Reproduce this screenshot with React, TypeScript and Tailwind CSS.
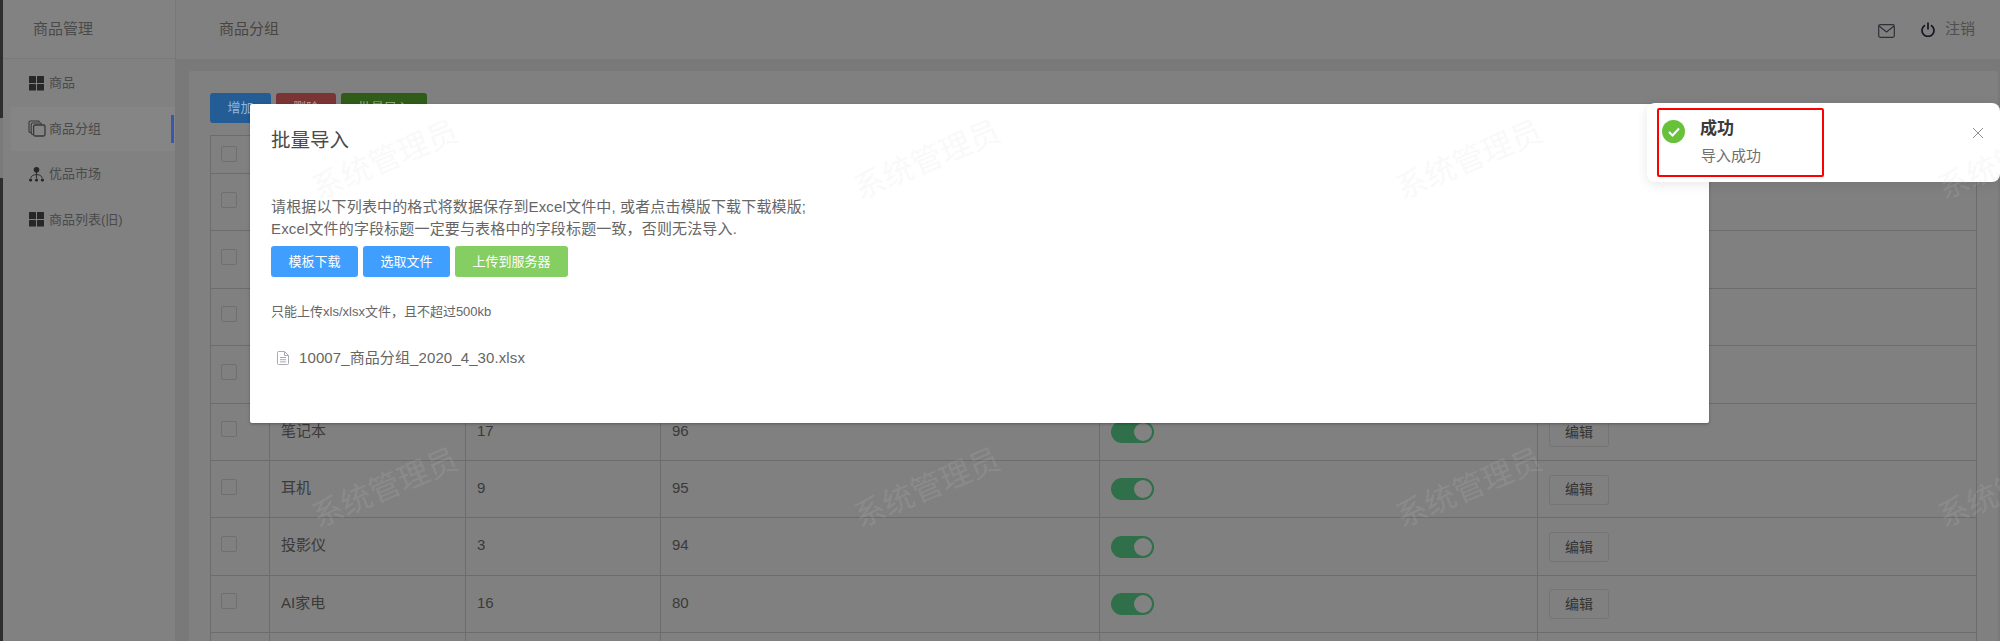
import React from "react";

const FONT = "font-['Liberation_Sans','Noto_Sans_CJK_SC',sans-serif]";

function GridIcon() {
  return (
    <svg width="15" height="15" viewBox="0 0 15 15" className="shrink-0">
      <g fill="#272727">
        <rect x="0" y="0" width="7" height="7" rx="0.5" />
        <rect x="8" y="0" width="7" height="7" rx="0.5" />
        <rect x="0" y="8" width="7" height="6.5" rx="0.5" />
        <rect x="8" y="8" width="7" height="6.5" rx="0.5" />
      </g>
    </svg>
  );
}

function CopyIcon() {
  return (
    <svg width="18" height="17" viewBox="0 0 18 17" className="shrink-0 -ml-[1px] -mr-[2px]" fill="none" stroke="#383838" strokeWidth="1.1">
      <path d="M3.5 12.5H2.5A1.5 1.5 0 0 1 1 11V2.5A1.5 1.5 0 0 1 2.5 1H10a1.5 1.5 0 0 1 1.5 1" />
      <path d="M5.5 14.5H4.6A1.5 1.5 0 0 1 3.2 13V4.5A1.5 1.5 0 0 1 4.6 3H12a1.5 1.5 0 0 1 1.5 1" />
      <rect x="5.6" y="5" width="11.4" height="11" rx="1.5" strokeWidth="1.3" />
    </svg>
  );
}

function TreeIcon() {
  return (
    <svg width="15" height="15" viewBox="0 0 15 15" className="shrink-0">
      <g fill="#272727">
        <circle cx="7.5" cy="2.8" r="2.8" />
        <circle cx="1.6" cy="13" r="1.6" />
        <circle cx="7.5" cy="13" r="1.6" />
        <circle cx="13.4" cy="13" r="1.6" />
      </g>
      <path d="M7.5 5v6M1.8 11c.6-2.5 3-3.4 5.7-3.4s5.100.9 5.700 3.400" fill="none" stroke="#272727" strokeWidth="0.9" />
    </svg>
  );
}

function MenuItem({
  icon,
  label,
  active,
}: {
  icon: React.ReactNode;
  label: string;
  active?: boolean;
}) {
  return (
    <div
      className={
        active
          ? "relative flex h-[44px] items-center gap-[5px] bg-[#858585] pl-[18px] mb-[1.500px]"
          : "flex h-[44px] items-center gap-[5px] pl-[18px] mb-[1.500px]"
      }
    >
      {icon}
      <span className="text-[13px] text-[#4a4a4a]">{label}</span>
      {active && <span className="absolute right-[1px] top-[8px] h-[28px] w-[3px] bg-[#3b58a8]" />}
    </div>
  );
}

function Sidebar() {
  return (
    <aside className="flex w-[173px] shrink-0 flex-col border-r border-[#787878] bg-[#818181]">
      <div className="flex h-[59px] items-center border-b border-[#797979] bg-[#828282] pl-[30px] text-[15px] text-[#4a4a4a]">
        商品管理
      </div>
      <div className="flex flex-col pl-[8px] pt-[2px]">
        <MenuItem icon={<GridIcon />} label="商品" />
        <MenuItem icon={<CopyIcon />} label="商品分组" active />
        <MenuItem icon={<TreeIcon />} label="优品市场" />
        <MenuItem icon={<GridIcon />} label="商品列表(旧)" />
      </div>
    </aside>
  );
}

function Topbar() {
  return (
    <header className="flex h-[59px] items-center justify-between bg-[#808080] pl-[43px] pr-[25px]">
      <span className="text-[15px] text-[#4a4540]">商品分组</span>
      <div className="flex items-center">
        <svg width="17" height="14" viewBox="0 0 17 14" className="mr-[26px] mt-[3px]" fill="none" stroke="#2f2f36" strokeWidth="1.200">
          <rect x="0.700" y="0.700" width="15.600" height="12.600" rx="1.500" />
          <path d="M1 2l7.500 6L16 2" />
        </svg>
        <svg width="14" height="15" viewBox="0 0 14 15" className="mr-[10px]" fill="none" stroke="#16181f" strokeWidth="1.700">
          <path d="M4 3.200A6 6 0 1 0 10 3.200" />
          <path d="M7 0.500v7" />
        </svg>
        <span className="text-[15px] text-[#4f4f4f]">注销</span>
      </div>
    </header>
  );
}

function Toggle() {
  return (
    <div className="flex h-[22px] w-[43px] items-center justify-end rounded-full bg-[#2f6f49] pr-[2px]">
      <div className="h-[18px] w-[18px] rounded-full bg-[#828282]" />
    </div>
  );
}

const rows: { name?: string; count?: string; sort?: string; on?: boolean }[] = [
  {},
  {},
  {},
  {},
  { name: "笔记本", count: "17", sort: "96", on: true },
  { name: "耳机", count: "9", sort: "95", on: true },
  { name: "投影仪", count: "3", sort: "94", on: true },
  { name: "AI家电", count: "16", sort: "80", on: true },
  {},
];

function CheckBox() {
  return <div className="-mt-[5px] h-[16px] w-[16px] rounded-[2px] border border-[#6f6f6f]" />;
}

function Table() {
  return (
    <table className="w-[1766px] table-fixed border-collapse border border-[#6c6c6c] text-[15px] text-[#3a3a3a]">
      <colgroup>
        <col className="w-[59px]" />
        <col className="w-[196px]" />
        <col className="w-[195px]" />
        <col className="w-[439px]" />
        <col className="w-[438px]" />
        <col className="w-[439px]" />
      </colgroup>
      <tbody>
        <tr className="h-[38px] border-b border-[#6c6c6c]">
          <td className="border-r border-[#6c6c6c] pl-[10px] pt-[3px]">
            <CheckBox />
          </td>
          <td className="border-r border-[#6c6c6c]" />
          <td className="border-r border-[#6c6c6c]" />
          <td className="border-r border-[#6c6c6c]" />
          <td className="border-r border-[#6c6c6c]" />
          <td />
        </tr>
        {rows.map((r, i) => (
          <tr key={i} className="h-[57.400px] border-b border-[#6c6c6c]">
            <td className="border-r border-[#6c6c6c] pl-[10px]">
              <CheckBox />
            </td>
            <td className="border-r border-[#6c6c6c] pb-[2px] pl-[11px]">{r.name}</td>
            <td className="border-r border-[#6c6c6c] pb-[2px] pl-[11px]">{r.count}</td>
            <td className="border-r border-[#6c6c6c] pb-[2px] pl-[11px]">{r.sort}</td>
            <td className="border-r border-[#6c6c6c] pl-[11px]">{r.on && <Toggle />}</td>
            <td className="pl-[11px] pt-[1px]">
              {r.on && (
                <button className="h-[30px] w-[60px] rounded-[3px] border border-[#747474] text-[14px] text-[#333333]">
                  编辑
                </button>
              )}
            </td>
          </tr>
        ))}
      </tbody>
    </table>
  );
}

function Content() {
  return (
    <main className="flex-1 overflow-hidden bg-[#797979] pl-[13px] pr-[2px] pt-[12px]">
      <div className="h-full rounded-t-[2px] bg-[#808080] pl-[21px] pt-[22px]">
        <div className="mb-[12px] flex gap-[5px]">
          <button className="h-[30px] w-[61px] rounded-[3px] bg-[#245c96] text-[13px] text-[#8fb5dc]">增加</button>
          <button className="h-[30px] w-[60px] rounded-[3px] bg-[#7a3434] text-[13px] text-[#c49a9a]">删除</button>
          <button className="h-[30px] w-[86px] rounded-[3px] bg-[#2f5c18] text-[13px] text-[#96b387]">批量导入</button>
        </div>
        <Table />
      </div>
    </main>
  );
}

function ImportDialog() {
  return (
    <div className="absolute left-[250px] top-[104px] h-[319px] w-[1459px] rounded-[2px] bg-white pl-[21px] text-[#666666] shadow-[0_1px_3px_rgba(0,0,0,0.3)]">
      <h2 className="mt-[22px] h-[28px] text-[19.500px] leading-[28px] text-[#4a4a4a]">批量导入</h2>
      <p className="mt-[42px] text-[15px] leading-[22px] tracking-[0.150px]">
        请根据以下列表中的格式将数据保存到Excel文件中, 或者点击模版下载下载模版;
        <br />
        Excel文件的字段标题一定要与表格中的字段标题一致，否则无法导入.
      </p>
      <div className="mt-[6px] flex">
        <button className="mr-[5px] h-[31px] w-[87px] rounded-[3px] bg-[#409eff] text-[13px] text-white">模板下载</button>
        <button className="mr-[5px] h-[31px] w-[87px] rounded-[3px] bg-[#409eff] text-[13px] text-white">选取文件</button>
        <button className="h-[31px] w-[113px] rounded-[3px] bg-[#85ce61] text-[13px] text-white">上传到服务器</button>
      </div>
      <p className="mt-[26px] text-[13px] leading-[17px]">只能上传xls/xlsx文件，且不超过500kb</p>
      <div className="mt-[25px] flex items-center pl-[6px] text-[15px] leading-[25px] tracking-[0.100px]">
        <svg width="12" height="14" viewBox="0 0 12 14" className="mr-[10px]" fill="none" stroke="#a8abb2" strokeWidth="1">
          <path d="M1.500 0.500h6l4 4v8a1 1 0 0 1-1 1h-9a1 1 0 0 1-1-1v-11a1 1 0 0 1 1-1z" />
          <path d="M7.500 0.500v4h4M3 6.500h6M3 8.700h6M3 10.900h6" />
        </svg>
        10007_商品分组_2020_4_30.xlsx
      </div>
    </div>
  );
}

function Toast() {
  return (
    <div className="absolute left-[1647px] top-[103px] flex h-[79px] w-[353px] rounded-[8px] bg-white shadow-[0_2px_12px_rgba(0,0,0,0.1)]">
      <div className="ml-[15px] mt-[17px] flex h-[23px] w-[23px] items-center justify-center rounded-full bg-[#67c23a]">
        <svg width="12" height="10" viewBox="0 0 12 10" fill="none" stroke="white" strokeWidth="2">
          <path d="M1 5l3.500 3.500L11 1.500" />
        </svg>
      </div>
      <div className="ml-[15px] mt-[14px]">
        <div className="text-[17px] font-bold leading-[24px] text-[#3a3a3a]">成功</div>
        <div className="ml-[1px] mt-[4px] text-[15px] leading-[22px] text-[#707070]">导入成功</div>
      </div>
      <svg width="12" height="12" viewBox="0 0 12 12" className="ml-auto mr-[16px] mt-[24px]" fill="none" stroke="#909399" strokeWidth="1">
        <path d="M1 1l10 10M11 1L1 11" />
      </svg>
    </div>
  );
}

function Watermark({ className }: { className: string }) {
  return (
    <span
      className={`pointer-events-none absolute w-[180px] -translate-x-1/2 -translate-y-1/2 -rotate-[23deg] whitespace-nowrap text-center text-[31px] leading-none text-[rgba(210,210,210,0.15)] ${className}`}
    >
      系统管理员
    </span>
  );
}

export default function App() {
  return (
    <div className={`relative flex h-[641px] w-[2000px] overflow-hidden bg-[#808080] ${FONT}`}>
      <div className="flex w-[3px] shrink-0 flex-col">
        <div className="h-[118px] bg-[#2e2e2e]" />
        <div className="h-[60px] bg-[#7a7a7a]" />
        <div className="flex-1 bg-[#2e2e2e]" />
      </div>
      <Sidebar />
      <div className="flex min-w-0 flex-1 flex-col">
        <Topbar />
        <Content />
      </div>
      <ImportDialog />
      <Toast />
      <div className="absolute left-[1657px] top-[108px] h-[69px] w-[167px] rounded-[2px] border-[2.500px] border-[#ff0000]" />
      <Watermark className="left-[385px] top-[160px]" />
      <Watermark className="left-[927px] top-[160px]" />
      <Watermark className="left-[1469px] top-[160px]" />
      <Watermark className="left-[2011px] top-[160px]" />
      <Watermark className="left-[385px] top-[488px]" />
      <Watermark className="left-[927px] top-[488px]" />
      <Watermark className="left-[1469px] top-[488px]" />
      <Watermark className="left-[2011px] top-[488px]" />
    </div>
  );
}
